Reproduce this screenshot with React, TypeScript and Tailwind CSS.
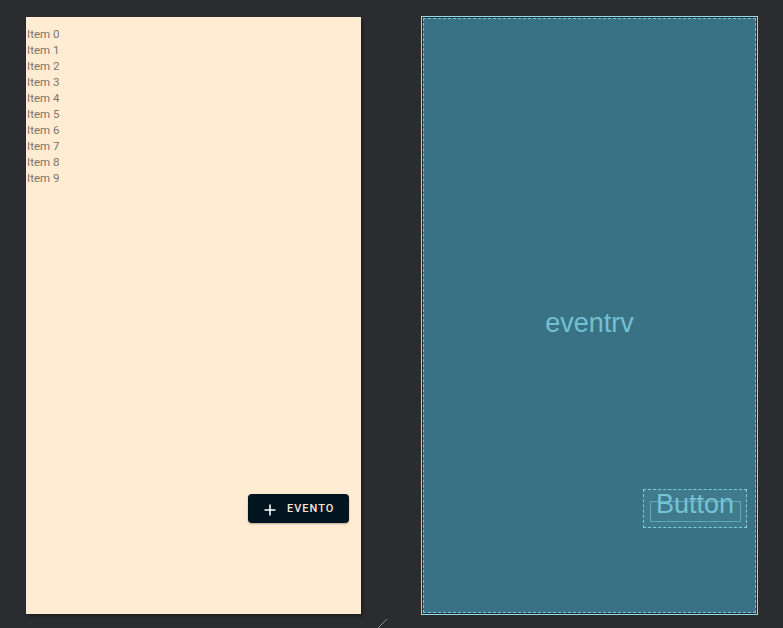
import React from 'react';

const items = Array.from({ length: 10 }, (_, i) => `Item ${i}`);

function PhonePreview() {
  return (
    <div className="flex h-[597px] w-[335px] shrink-0 flex-col bg-[#ffecd2] shadow-[2px_2px_3px_rgba(0,0,0,0.35)]">
      {/* RecyclerView sample items */}
      <div className="flex flex-col pl-[1px] pt-[9px]">
        {items.map(label => (
          <span key={label} className="h-[16px] text-[11.5px] leading-[16px] text-[#7b736b]" style={{ fontFamily: 'Roboto, "Noto Sans", sans-serif' }}>
            {label}
          </span>
        ))}
      </div>
      <div className="flex-1" />
      {/* Extended FAB */}
      <button className="mb-[91px] mr-[12px] flex h-[29px] w-[101px] items-center gap-[11px] self-end rounded-[4px] bg-[#01141f] pl-[16px] pt-[2px] shadow-[0_1px_2px_rgba(0,0,0,0.3)]">
        <svg width="12" height="12" viewBox="0 0 12 12" className="shrink-0">
          <path d="M6 0.5v11M0.5 6h11" stroke="#ffffff" strokeWidth="1.6" />
        </svg>
        <span className="text-[11px] font-medium tracking-[0.09em] text-[#f6e8d4]" style={{ fontFamily: 'Roboto, "Noto Sans", sans-serif' }}>
          EVENTO
        </span>
      </button>
    </div>
  );
}

function BlueprintPreview() {
  return (
    <div className="ml-[60px] mt-[-1px] h-[599px] w-[337px] shrink-0 border border-[#8fdcee] p-px">
      <div className="flex h-full w-full flex-col border border-dashed border-[#6fc7db] bg-[#3a7285]">
        <div className="pt-[289px] text-center text-[27px] leading-[30px] text-[#73c0d2]" style={{ fontFamily: '"Liberation Sans", Arial, sans-serif' }}>
          eventrv
        </div>
        <div className="flex-1" />
        {/* Button outline */}
        <div className="mb-[84px] mr-[8px] grid h-[39px] w-[104px] place-items-center self-end border border-dashed border-[#7ccde0] bg-[#3f7b8d]">
          <div className="col-start-1 row-start-1 h-[21px] w-[91px] translate-y-[3px] border border-[#5ea9bb]" />
          <span className="col-start-1 row-start-1 -translate-y-[5px] text-[27px] leading-[30px] text-[#76c3d5]" style={{ fontFamily: '"Liberation Sans", Arial, sans-serif' }}>
            Button
          </span>
        </div>
      </div>
    </div>
  );
}

export default function App() {
  return (
    <div className="relative flex h-[628px] w-[783px] items-start overflow-hidden bg-[#2b2c2f] pl-[26px] pt-[17px]">
      <PhonePreview />
      <BlueprintPreview />
      {/* resize handle */}
      <svg className="absolute left-[376px] top-[618px]" width="12" height="12" viewBox="0 0 12 12">
        <path d="M1 11L11 1" stroke="#8a8c90" strokeWidth="1" />
      </svg>
    </div>
  );
}
